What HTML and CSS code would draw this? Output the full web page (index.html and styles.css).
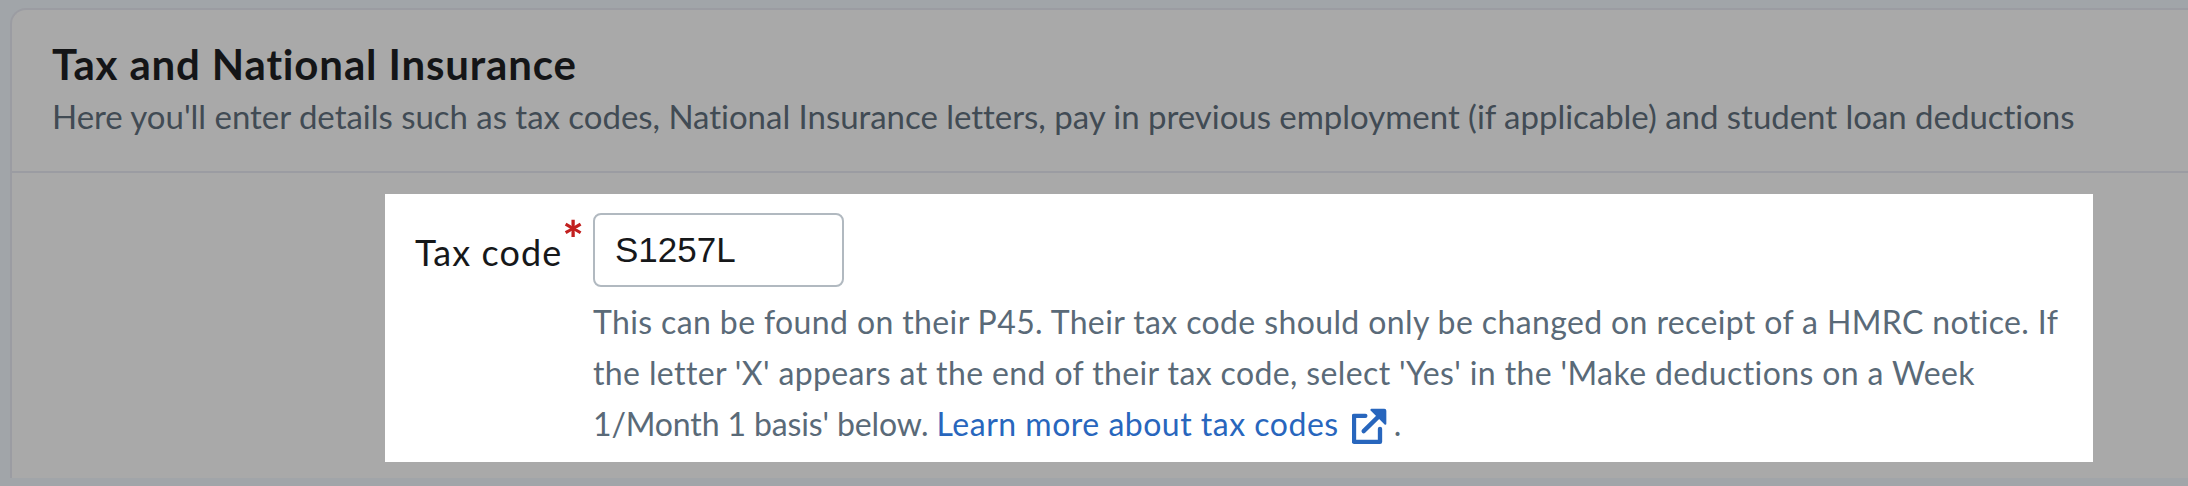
FILE: index.html
```html
<!DOCTYPE html>
<html lang="en">
<head>
  <meta charset="UTF-8" />
  <title>Tax and National Insurance</title>
  <link rel="stylesheet" href="styles.css">
</head>
<body>
  <div class="card">
    <div class="card-header">
      <h2>Tax and National Insurance</h2>
      <p>Here you'll enter details such as tax codes, National Insurance letters, pay in previous employment (if applicable) and student loan deductions</p>
    </div>
    <div class="highlight">
      <div class="field">
        <label class="field-label" for="tax-code">Tax code<span class="required">*</span></label>
        <div class="field-body">
          <input id="tax-code" type="text" value="S1257L" readonly />
          <p class="help">This can be found on their P45. Their tax code should only be changed on receipt of a HMRC notice. If the letter 'X' appears at the end of their tax code, select 'Yes' in the 'Make deductions on a Week <span class="help-tail">1/Month 1 basis' below. </span><a href="#">Learn more about tax codes<svg class="external" viewBox="0 0 105 107" aria-hidden="true"><path d="M40 23H6V101H84V62" fill="none" stroke="currentColor" stroke-width="13" stroke-linejoin="round" stroke-linecap="round"/><path d="M35 69L90 15" fill="none" stroke="currentColor" stroke-width="13" stroke-linecap="round"/><path d="M58 5H97a3 3 0 0 1 3 3V47z" fill="currentColor" stroke="currentColor" stroke-width="6" stroke-linejoin="round"/></svg></a>.</p>
        </div>
      </div>
    </div>
  </div>
</body>
</html>
```

FILE: styles.css
```css
body {
  font-family: Lato, "Noto Sans", sans-serif;
  background: #a1a5a9;
  margin: 0;
  padding: 8px 0 0 10px;
  height: 478px;
  overflow: hidden;
  box-sizing: border-box;
}
.card {
  background: #a9a9a9;
  border-top: 2px solid #9b9ca2;
  border-left: 2px solid #9b9ca2;
  border-top-left-radius: 16px;
  height: 476px;
}
.card-header {
  height: 161px;
  padding: 0 0 0 40px;
  border-bottom: 2px solid #9b9ca2;
}
.card-header h2 {
  margin: 0;
  padding-top: 30px;
  font-size: 42px;
  line-height: 48px;
  font-weight: 700;
  letter-spacing: 0.85px;
  color: #141517;
}
.card-header p {
  margin: 0;
  padding-top: 8px;
  font-size: 33px;
  line-height: 40px;
  letter-spacing: -0.03px;
  color: #414b54;
}
.highlight {
  margin: 21px 0 0 373px;
  width: 1708px;
  height: 268px;
  background: #fff;
  box-sizing: border-box;
  padding: 19px 0 0 30px;
}
.field {
  display: flex;
  align-items: flex-start;
}
.field-label {
  display: flex;
  width: 178px;
  padding-top: 17px;
  font-size: 36px;
  line-height: 44px;
  letter-spacing: 1.1px;
  color: #16181a;
}
.required {
  color: #c2201f;
  font-size: 50px;
  font-weight: 900;
  line-height: 24px;
  margin-top: -3px;
  letter-spacing: 0;
}
.field-body {
  width: 1490px;
}
.field-body input {
  display: block;
  width: 251px;
  height: 74px;
  box-sizing: border-box;
  border: 2px solid #b1b9c0;
  border-radius: 8px;
  padding: 0 20px;
  font-family: "Liberation Sans", Arial, sans-serif;
  font-size: 35px;
  color: #16181a;
  outline: none;
}
.help {
  margin: 9px 0 0;
  font-size: 32px;
  line-height: 51px;
  letter-spacing: 0.38px;
  color: #5a6a78;
}
.help-tail {
  letter-spacing: -0.13px;
}
.help a {
  color: #2866bd;
  text-decoration: none;
  letter-spacing: 0.5px;
}
.external {
  width: 35px;
  height: 36px;
  margin: 0 7px 0 13px;
  vertical-align: -8px;
}
```
